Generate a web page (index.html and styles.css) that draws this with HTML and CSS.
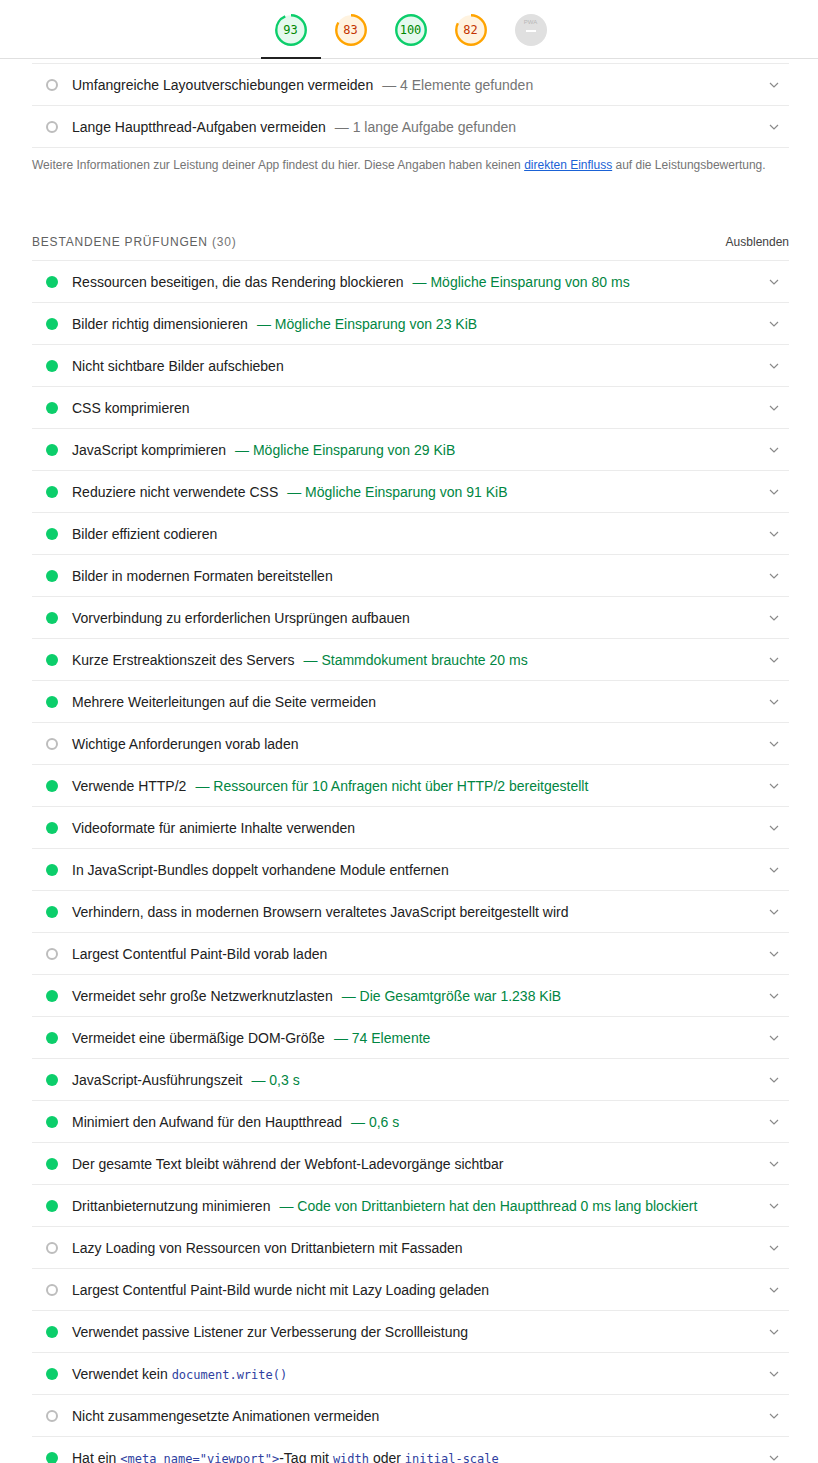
FILE: index.html
```html
<!DOCTYPE html>
<html lang="de">
<head>
<meta charset="utf-8">
<title>Lighthouse Bericht</title>
<link rel="stylesheet" href="styles.css">
</head>
<body>
<header class="topbar">
  <nav class="gauges">
    <a class="tab active"><span class="gauge pass"><svg viewBox="0 0 32 32"><circle class="bg" cx="16" cy="16" r="14.75"/><circle class="arc" cx="16" cy="16" r="14.75" stroke-dasharray="86.19 200" transform="rotate(-90 16 16)"/></svg><span class="num">93</span></span></a>
    <a class="tab"><span class="gauge avg"><svg viewBox="0 0 32 32"><circle class="bg" cx="16" cy="16" r="14.75"/><circle class="arc" cx="16" cy="16" r="14.75" stroke-dasharray="76.92 200" transform="rotate(-90 16 16)"/></svg><span class="num">83</span></span></a>
    <a class="tab"><span class="gauge pass"><svg viewBox="0 0 32 32"><circle class="bg" cx="16" cy="16" r="14.75"/><circle class="arc" cx="16" cy="16" r="14.75" stroke-dasharray="92.68 200" transform="rotate(-90 16 16)"/></svg><span class="num">100</span></span></a>
    <a class="tab"><span class="gauge avg"><svg viewBox="0 0 32 32"><circle class="bg" cx="16" cy="16" r="14.75"/><circle class="arc" cx="16" cy="16" r="14.75" stroke-dasharray="76.0 200" transform="rotate(-90 16 16)"/></svg><span class="num">82</span></span></a>
    <a class="tab"><span class="gauge pwa"><span class="pwa-label">PWA</span><span class="pwa-dash"></span></span></a>
  </nav>
</header>

<main class="content">
  <div class="audits first">
    <div class="audit info"><span class="icon"></span><span class="title">Umfangreiche Layoutverschiebungen vermeiden</span><span class="display">— 4 Elemente gefunden</span><svg class="chev" viewBox="0 0 10 6"><path d="M1 1l4 4 4-4"/></svg></div>
    <div class="audit info"><span class="icon"></span><span class="title">Lange Hauptthread-Aufgaben vermeiden</span><span class="display">— 1 lange Aufgabe gefunden</span><svg class="chev" viewBox="0 0 10 6"><path d="M1 1l4 4 4-4"/></svg></div>
  </div>
  <p class="note">Weitere Informationen zur Leistung deiner App findest du hier. Diese Angaben haben keinen <a href="#">direkten Einfluss</a> auf die Leistungsbewertung.</p>

  <div class="group-head">
    <span class="group-title">Bestandene Prüfungen <span class="count">(30)</span></span>
    <span class="toggle">Ausblenden</span>
  </div>
  <div class="audits">
    <div class="audit pass"><span class="icon"></span><span class="title">Ressourcen beseitigen, die das Rendering blockieren</span><span class="display">— Mögliche Einsparung von 80 ms</span><svg class="chev" viewBox="0 0 10 6"><path d="M1 1l4 4 4-4"/></svg></div>
    <div class="audit pass"><span class="icon"></span><span class="title">Bilder richtig dimensionieren</span><span class="display">— Mögliche Einsparung von 23 KiB</span><svg class="chev" viewBox="0 0 10 6"><path d="M1 1l4 4 4-4"/></svg></div>
    <div class="audit pass"><span class="icon"></span><span class="title">Nicht sichtbare Bilder aufschieben</span><svg class="chev" viewBox="0 0 10 6"><path d="M1 1l4 4 4-4"/></svg></div>
    <div class="audit pass"><span class="icon"></span><span class="title">CSS komprimieren</span><svg class="chev" viewBox="0 0 10 6"><path d="M1 1l4 4 4-4"/></svg></div>
    <div class="audit pass"><span class="icon"></span><span class="title">JavaScript komprimieren</span><span class="display">— Mögliche Einsparung von 29 KiB</span><svg class="chev" viewBox="0 0 10 6"><path d="M1 1l4 4 4-4"/></svg></div>
    <div class="audit pass"><span class="icon"></span><span class="title">Reduziere nicht verwendete CSS</span><span class="display">— Mögliche Einsparung von 91 KiB</span><svg class="chev" viewBox="0 0 10 6"><path d="M1 1l4 4 4-4"/></svg></div>
    <div class="audit pass"><span class="icon"></span><span class="title">Bilder effizient codieren</span><svg class="chev" viewBox="0 0 10 6"><path d="M1 1l4 4 4-4"/></svg></div>
    <div class="audit pass"><span class="icon"></span><span class="title">Bilder in modernen Formaten bereitstellen</span><svg class="chev" viewBox="0 0 10 6"><path d="M1 1l4 4 4-4"/></svg></div>
    <div class="audit pass"><span class="icon"></span><span class="title">Vorverbindung zu erforderlichen Ursprüngen aufbauen</span><svg class="chev" viewBox="0 0 10 6"><path d="M1 1l4 4 4-4"/></svg></div>
    <div class="audit pass"><span class="icon"></span><span class="title">Kurze Erstreaktionszeit des Servers</span><span class="display">— Stammdokument brauchte 20 ms</span><svg class="chev" viewBox="0 0 10 6"><path d="M1 1l4 4 4-4"/></svg></div>
    <div class="audit pass"><span class="icon"></span><span class="title">Mehrere Weiterleitungen auf die Seite vermeiden</span><svg class="chev" viewBox="0 0 10 6"><path d="M1 1l4 4 4-4"/></svg></div>
    <div class="audit info"><span class="icon"></span><span class="title">Wichtige Anforderungen vorab laden</span><svg class="chev" viewBox="0 0 10 6"><path d="M1 1l4 4 4-4"/></svg></div>
    <div class="audit pass"><span class="icon"></span><span class="title">Verwende HTTP/2</span><span class="display">— Ressourcen für 10 Anfragen nicht über HTTP/2 bereitgestellt</span><svg class="chev" viewBox="0 0 10 6"><path d="M1 1l4 4 4-4"/></svg></div>
    <div class="audit pass"><span class="icon"></span><span class="title">Videoformate für animierte Inhalte verwenden</span><svg class="chev" viewBox="0 0 10 6"><path d="M1 1l4 4 4-4"/></svg></div>
    <div class="audit pass"><span class="icon"></span><span class="title">In JavaScript-Bundles doppelt vorhandene Module entfernen</span><svg class="chev" viewBox="0 0 10 6"><path d="M1 1l4 4 4-4"/></svg></div>
    <div class="audit pass"><span class="icon"></span><span class="title">Verhindern, dass in modernen Browsern veraltetes JavaScript bereitgestellt wird</span><svg class="chev" viewBox="0 0 10 6"><path d="M1 1l4 4 4-4"/></svg></div>
    <div class="audit info"><span class="icon"></span><span class="title">Largest Contentful Paint-Bild vorab laden</span><svg class="chev" viewBox="0 0 10 6"><path d="M1 1l4 4 4-4"/></svg></div>
    <div class="audit pass"><span class="icon"></span><span class="title">Vermeidet sehr große Netzwerknutzlasten</span><span class="display">— Die Gesamtgröße war 1.238 KiB</span><svg class="chev" viewBox="0 0 10 6"><path d="M1 1l4 4 4-4"/></svg></div>
    <div class="audit pass"><span class="icon"></span><span class="title">Vermeidet eine übermäßige DOM-Größe</span><span class="display">— 74 Elemente</span><svg class="chev" viewBox="0 0 10 6"><path d="M1 1l4 4 4-4"/></svg></div>
    <div class="audit pass"><span class="icon"></span><span class="title">JavaScript-Ausführungszeit</span><span class="display">— 0,3 s</span><svg class="chev" viewBox="0 0 10 6"><path d="M1 1l4 4 4-4"/></svg></div>
    <div class="audit pass"><span class="icon"></span><span class="title">Minimiert den Aufwand für den Hauptthread</span><span class="display">— 0,6 s</span><svg class="chev" viewBox="0 0 10 6"><path d="M1 1l4 4 4-4"/></svg></div>
    <div class="audit pass"><span class="icon"></span><span class="title">Der gesamte Text bleibt während der Webfont-Ladevorgänge sichtbar</span><svg class="chev" viewBox="0 0 10 6"><path d="M1 1l4 4 4-4"/></svg></div>
    <div class="audit pass"><span class="icon"></span><span class="title">Drittanbieternutzung minimieren</span><span class="display">— Code von Drittanbietern hat den Hauptthread 0 ms lang blockiert</span><svg class="chev" viewBox="0 0 10 6"><path d="M1 1l4 4 4-4"/></svg></div>
    <div class="audit info"><span class="icon"></span><span class="title">Lazy Loading von Ressourcen von Drittanbietern mit Fassaden</span><svg class="chev" viewBox="0 0 10 6"><path d="M1 1l4 4 4-4"/></svg></div>
    <div class="audit info"><span class="icon"></span><span class="title">Largest Contentful Paint-Bild wurde nicht mit Lazy Loading geladen</span><svg class="chev" viewBox="0 0 10 6"><path d="M1 1l4 4 4-4"/></svg></div>
    <div class="audit pass"><span class="icon"></span><span class="title">Verwendet passive Listener zur Verbesserung der Scrollleistung</span><svg class="chev" viewBox="0 0 10 6"><path d="M1 1l4 4 4-4"/></svg></div>
    <div class="audit pass"><span class="icon"></span><span class="title">Verwendet kein <code>document.write()</code></span><svg class="chev" viewBox="0 0 10 6"><path d="M1 1l4 4 4-4"/></svg></div>
    <div class="audit info"><span class="icon"></span><span class="title">Nicht zusammengesetzte Animationen vermeiden</span><svg class="chev" viewBox="0 0 10 6"><path d="M1 1l4 4 4-4"/></svg></div>
    <div class="audit pass"><span class="icon"></span><span class="title">Hat ein <code>&lt;meta name="viewport"&gt;</code>-Tag mit <code>width</code> oder <code>initial-scale</code></span><svg class="chev" viewBox="0 0 10 6"><path d="M1 1l4 4 4-4"/></svg></div>
    <div class="audit pass"><span class="icon"></span><span class="title">Vermeidet <code>unload</code>-Event-Listener</span><svg class="chev" viewBox="0 0 10 6"><path d="M1 1l4 4 4-4"/></svg></div>
  </div>
</main>
</body>
</html>
```

FILE: styles.css
```css
html, body {
  margin: 0;
  padding: 0;
  background: #ffffff;
}

body {
  font-family: "Liberation Sans", Arial, sans-serif;
  color: #212121;
  font-size: 14px;
}

.topbar {
  height: 58px;
  border-bottom: 1px solid #e0e0e0;
}

.gauges {
  width: 757px;
  margin-left: 32px;
  height: 58px;
  display: flex;
  justify-content: center;
}

.tab {
  position: relative;
  width: 60px;
  height: 58px;
  box-sizing: border-box;
  padding-top: 14px;
  display: flex;
  justify-content: center;
  align-items: flex-start;
}

.tab.active::after {
  content: "";
  position: absolute;
  left: 0;
  right: 0;
  bottom: -1px;
  height: 2px;
  background: #212121;
}

.gauge {
  width: 32px;
  height: 32px;
  display: grid;
  place-items: center;
}

.gauge svg,
.gauge .num {
  grid-area: 1 / 1;
}

.gauge svg {
  width: 32px;
  height: 32px;
  display: block;
}

.gauge .bg {
  stroke: none;
}

.gauge .arc {
  fill: none;
  stroke-width: 2.4;
}

.gauge.pass .bg { fill: #e5f9ee; }
.gauge.pass .arc { stroke: #0cce6b; }
.gauge.pass .num { color: #008800; }

.gauge.avg .bg { fill: #fff3e0; }
.gauge.avg .arc { stroke: #ffa400; }
.gauge.avg .num { color: #c33300; }

.num {
  font-family: "DejaVu Sans Mono", "Liberation Mono", monospace;
  font-size: 12px;
  line-height: 1;
}

.gauge.pwa {
  background: #e0e0e0;
  border-radius: 50%;
  display: flex;
  flex-direction: column;
  align-items: center;
  justify-content: flex-start;
  padding-top: 5px;
  box-sizing: border-box;
  gap: 4px;
}

.pwa-label {
  font-family: "Liberation Sans", Arial, sans-serif;
  font-size: 6px;
  line-height: 7px;
  color: #b8b8b8;
  letter-spacing: 0.1px;
}

.pwa-dash {
  width: 10px;
  height: 2px;
  background: #ffffff;
}

.content {
  width: 757px;
  margin-left: 32px;
  padding-top: 4px;
}

.audits {
  border-top: 1px solid #ebebeb;
}

.audit {
  height: 41px;
  border-bottom: 1px solid #ebebeb;
  display: flex;
  align-items: center;
  padding-left: 14px;
  padding-right: 10px;
  white-space: nowrap;
}

.icon {
  width: 12px;
  height: 12px;
  border-radius: 50%;
  box-sizing: border-box;
  flex: none;
  margin-right: 14px;
}

.pass .icon {
  background: #0cce6b;
}

.info .icon {
  border: 2px solid #bdbdbd;
}

.title {
  color: #212121;
}

.display {
  margin-left: 9px;
}

.pass .display {
  color: #018642;
}

.info .display {
  color: #757575;
}

code {
  font-family: "DejaVu Sans Mono", "Liberation Mono", monospace;
  font-size: 12px;
  color: #303f9f;
}

.chev {
  margin-left: auto;
  width: 10px;
  height: 6px;
  flex: none;
}

.chev path {
  fill: none;
  stroke: #8a8a8a;
  stroke-width: 1.2;
}

.note {
  margin: 9px 0 0;
  font-size: 12px;
  line-height: 16px;
  color: #757575;
}

.note a {
  color: #1a62d6;
  text-decoration: underline;
}

.group-head {
  margin-top: 61px;
  padding-bottom: 10px;
  display: flex;
  justify-content: space-between;
  align-items: center;
  line-height: 16px;
}

.group-title {
  font-size: 12px;
  text-transform: uppercase;
  letter-spacing: 0.8px;
  color: #616161;
}

.count {
  color: #757575;
}

.toggle {
  font-size: 12px;
  color: #424242;
}
```
